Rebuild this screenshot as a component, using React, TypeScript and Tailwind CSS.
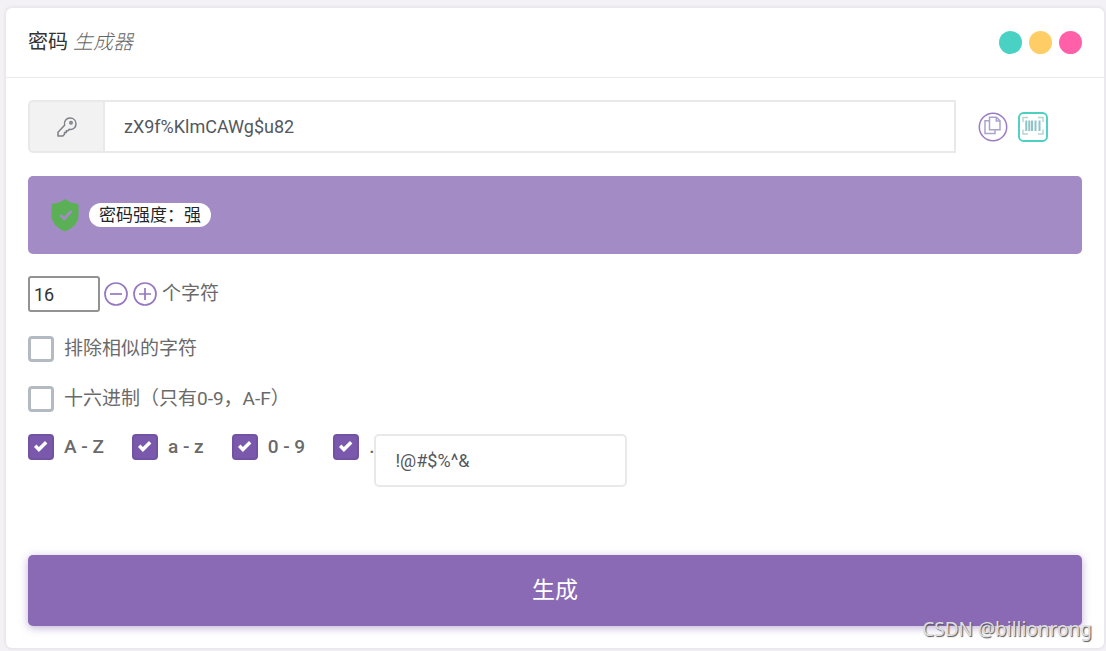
import { useState, type ReactNode } from "react";

function CheckBox({ label, checked = false, strong = false }: { label: ReactNode; checked?: boolean; strong?: boolean }) {
  const [on, setOn] = useState(checked);
  return (
    <label className="flex items-center gap-[10px] text-[19px]">
      <span className="grid size-[26px] shrink-0">
        <input
          type="checkbox"
          checked={on}
          onChange={(e) => setOn(e.target.checked)}
          className="col-start-1 row-start-1 size-[26px] appearance-none rounded-[4px] border-[3px] border-[#b3bac1] bg-white checked:border-2 checked:border-[#7252a2] checked:bg-[#7a58ab]"
        />
        {on && (
          <svg viewBox="0 0 26 26" className="pointer-events-none col-start-1 row-start-1 size-[26px]" fill="none" stroke="#fff" strokeWidth="3.4">
            <path d="M7.200 11.800l3.700 3.700L18.200 8.200" />
          </svg>
        )}
      </span>
      <span className={strong ? "font-medium whitespace-pre" : ""}>{label}</span>
    </label>
  );
}

function KeyIcon() {
  return (
    <svg viewBox="0 0 20 20" className="size-5" fill="none" stroke="#7d8087" strokeWidth="1.500" strokeLinejoin="round">
      <path d="M7.600 8.200C6.700 4.200 9.300 1 13 1c3.500 0 6 2.500 6 5.900 0 3.700-3.100 6.200-6.700 5.300l-1.300 1.500H9.300v1.800H7.500v1.700L5.800 19H1v-3.800z" />
      <circle cx="14" cy="5.700" r="1.200" />
    </svg>
  );
}

function CopyIcon() {
  return (
    <svg viewBox="0 0 30 30" className="size-[30px]" fill="none">
      <circle cx="15" cy="15" r="13.700" stroke="#9a7cc4" strokeWidth="1.500" />
      <g stroke="#aaa4cc" strokeWidth="1.500">
        <path d="M11 8.700H7v12.800h10V18" />
        <path d="M11.500 5.200h7l3.500 3.500v9H11.500z" fill="#fff" />
        <path d="M18.300 5.200V9H22" />
      </g>
    </svg>
  );
}

function BarcodeIcon() {
  return (
    <svg viewBox="0 0 30 30" className="size-[30px]" fill="none">
      <rect x="1" y="1" width="28" height="28" rx="4.500" stroke="#4bd0c1" strokeWidth="1.900" />
      <path d="M5 10V5.500h5M20 5.500h5V10M25 17.500V22h-5M10 22H5v-4.500" stroke="#b5d3cf" strokeWidth="1.400" />
      <path d="M8.300 8.500V19M11.300 8.500V19M14 8.500V19M17.500 8.500V19M21.500 8.500V19" stroke="#8cc4c8" strokeWidth="2" />
    </svg>
  );
}

function CircleIcon({ plus = false }: { plus?: boolean }) {
  return (
    <svg viewBox="0 0 24 24" className="size-6" fill="none" stroke="#9678c1" strokeWidth="1.700">
      <circle cx="12" cy="12" r="11" />
      <path d={plus ? "M6 12h12M12 6v12" : "M6 12h12"} />
    </svg>
  );
}

export default function App() {
  const [password, setPassword] = useState("zX9f%KlmCAWg$u82");
  const [length, setLength] = useState(16);
  const [symbols, setSymbols] = useState("!@#$%^&");

  return (
    <div className="relative min-h-screen bg-[#f3f1f5] pt-2 pr-0.5 pb-0.5 pl-1.5 font-[Roboto,'Noto_Sans_CJK_SC',sans-serif] text-[18px] leading-6 text-[#6a6a6a]">
      <main className="rounded-md bg-white pb-[22px] shadow-[0_0_2px_2px_rgba(0,0,0,0.04)]">
        <header className="flex items-center justify-between border-b border-[#e9e9e9] px-[22px] pt-[19px] pb-5">
          <h1 className="text-[20px] leading-[30px] font-normal text-[#333]">
            密码 <em className="font-light text-[#666]">生成器</em>
          </h1>
          <div className="flex gap-[7px]">
            <span className="size-[23px] rounded-full bg-[#49d2c3]" />
            <span className="size-[23px] rounded-full bg-[#ffcd66]" />
            <span className="size-[23px] rounded-full bg-[#ff60a8]" />
          </div>
        </header>

        <div className="flex flex-col px-[22px] pt-[22px]">
          <div className="flex items-center pr-[34px]">
            <label htmlFor="password" aria-label="密码" className="flex h-[53px] w-[77px] shrink-0 items-center justify-center rounded-l-[5px] border-2 border-[#e9e9e9] bg-[#f2f2f2]">
              <KeyIcon />
            </label>
            <input
              id="password"
              value={password}
              onChange={(e) => setPassword(e.target.value)}
              className="h-[53px] min-w-0 flex-1 border-2 border-l-0 border-[#e9e9e9] bg-white px-[19px] text-[#53585e] outline-none"
            />
            <button type="button" aria-label="复制" className="ml-[22px]">
              <CopyIcon />
            </button>
            <button type="button" aria-label="条码" className="ml-[10px]">
              <BarcodeIcon />
            </button>
          </div>

          <div className="mt-[23px] flex h-[78px] items-center gap-[10px] rounded-[5px] bg-[#a38bc5] px-[23px]">
            <svg viewBox="0 0 28 34" className="h-[34px] w-7">
              <path d="M14 1C10 4 6 5.500 1.500 5.800 1 6 .500 6.500 .500 7.200V17c0 8 6 13.500 13.500 16.500C21.500 30.500 27.500 25 27.500 17V7.200c0-.700-.500-1.200-1-1.400C22 5.500 18 4 14 1z" fill="#5bb055" />
              <path d="M9.500 17l3.700 3.700L20.500 13" fill="none" stroke="#a38bc5" strokeWidth="2.800" />
            </svg>
            <span className="rounded-full bg-white px-[10px] text-[17px] text-[#212529]">密码强度：强</span>
          </div>

          <div className="mt-[22px] flex items-center">
            <input
              aria-label="个字符"
              value={length}
              onChange={(e) => setLength(Number(e.target.value) || 0)}
              className="h-9 w-[72px] rounded-[3px] border-2 border-[#929292] bg-white px-1 text-[#333] outline-none"
            />
            <button type="button" aria-label="减少" className="ml-[4px]" onClick={() => setLength(length - 1)}>
              <CircleIcon />
            </button>
            <button type="button" aria-label="增加" className="ml-[5px]" onClick={() => setLength(length + 1)}>
              <CircleIcon plus />
            </button>
            <span className="ml-[5px] text-[19px]">个字符</span>
          </div>

          <div className="mt-6 flex flex-col items-start gap-6">
            <CheckBox label="排除相似的字符" />
            <CheckBox label="十六进制（只有0-9，A-F）" />
          </div>

          <div className="mt-[22px] flex items-start">
            <div className="flex items-center gap-7">
              <CheckBox label="A - Z" checked strong />
              <CheckBox label="a - z" checked strong />
              <CheckBox label="0 - 9" checked strong />
              <CheckBox label="." checked strong />
            </div>
            <input
              aria-label="符号"
              value={symbols}
              onChange={(e) => setSymbols(e.target.value)}
              className="h-[53px] w-[253px] rounded-[5px] border-2 border-[#e9e9e9] bg-white px-[19px] text-[#53585e] outline-none"
            />
          </div>

          <button type="button" className="mt-[68px] h-[71px] rounded-[5px] bg-[#8a6ab4] text-[23px] text-white shadow-[0_2px_8px_rgba(138,106,180,0.5)]">
            生成
          </button>
        </div>
      </main>
      <span className="absolute right-[14px] bottom-[8px] font-['Noto_Sans',sans-serif] text-[19px] leading-7 text-[#dedede] [text-shadow:1px_1px_1px_#555]">
        CSDN @billionrong
      </span>
    </div>
  );
}
